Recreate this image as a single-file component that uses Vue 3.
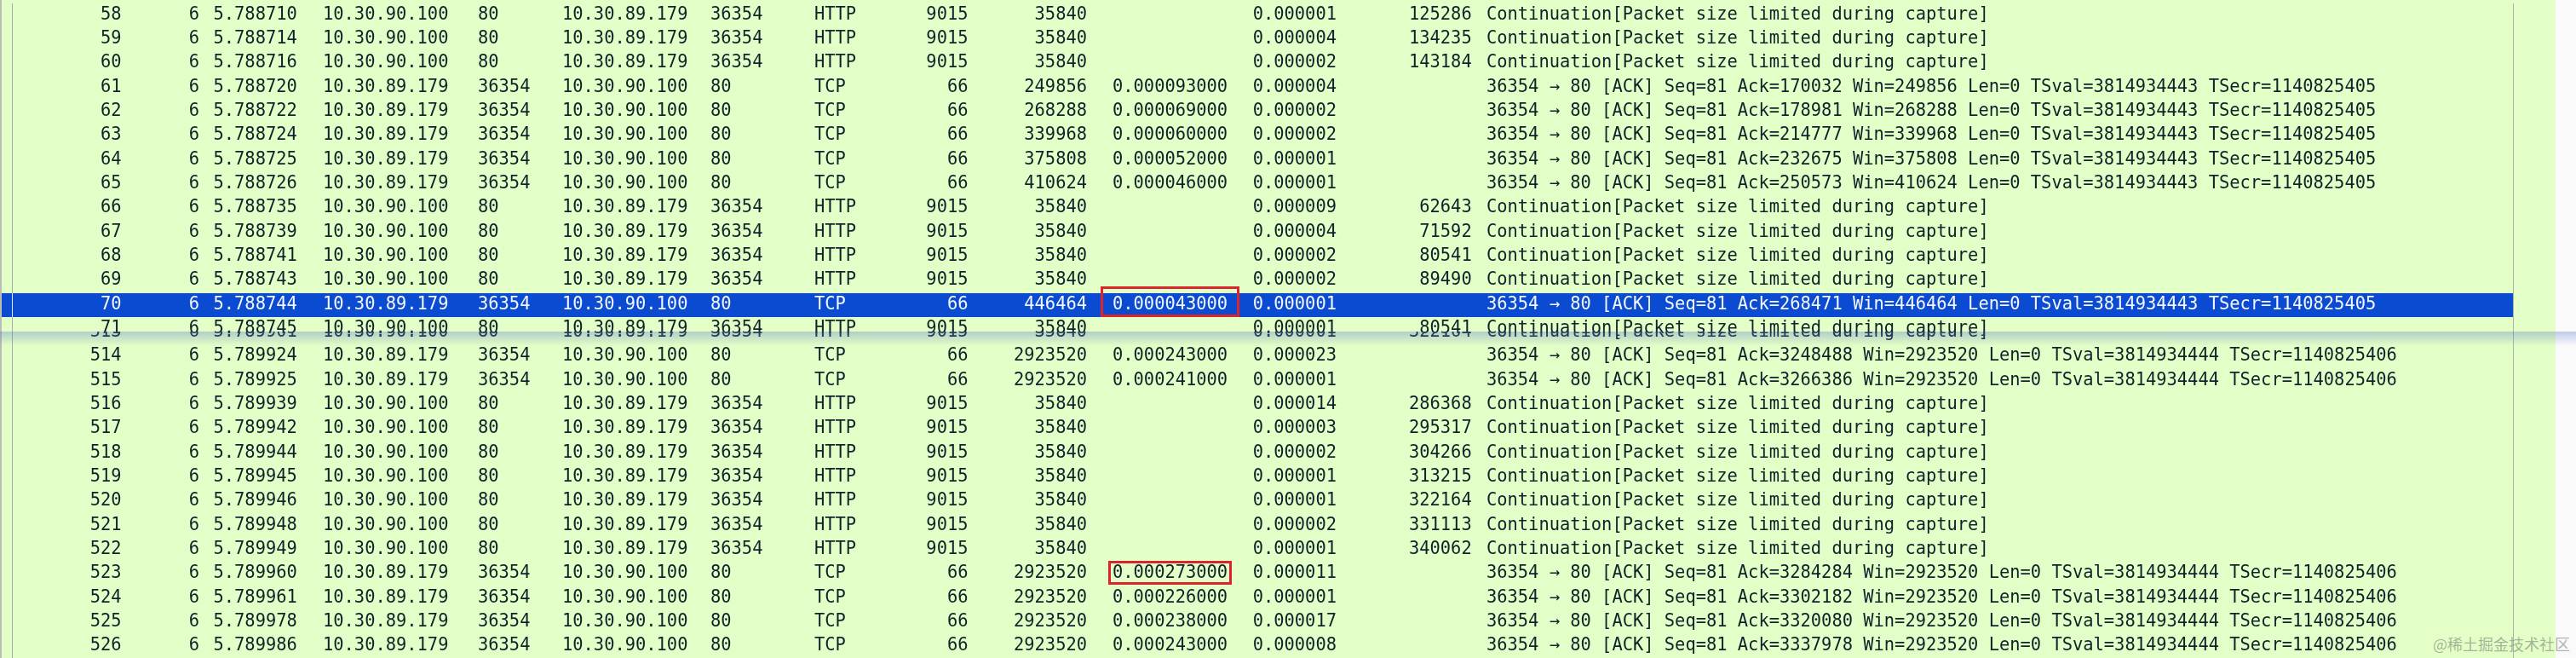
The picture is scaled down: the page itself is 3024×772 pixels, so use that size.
<script setup>
const CLIENT = '10.30.89.179'
const SERVER = '10.30.90.100'

function http(no, time, delta, bytes) {
  return {
    no, time, src: SERVER, sport: '80', dst: CLIENT, dport: '36354', proto: 'HTTP',
    len: '9015', win: '35840', rtt: '', delta, bytes,
    info: 'Continuation[Packet size limited during capture]'
  }
}

function ack(no, time, win, rtt, delta, ackNo, tsval, tsecr, extra = {}) {
  return {
    no, time, src: CLIENT, sport: '36354', dst: SERVER, dport: '80', proto: 'TCP',
    len: '66', win, rtt, delta, bytes: '',
    info: `36354 → 80 [ACK] Seq=81 Ack=${ackNo} Win=${win} Len=0 TSval=${tsval} TSecr=${tsecr}`,
    ...extra
  }
}

const A = ['3814934443', '1140825405']
const B = ['3814934444', '1140825406']

const upper = [
  http('58', '5.788710', '0.000001', '125286'),
  http('59', '5.788714', '0.000004', '134235'),
  http('60', '5.788716', '0.000002', '143184'),
  ack('61', '5.788720', '249856', '0.000093000', '0.000004', '170032', ...A),
  ack('62', '5.788722', '268288', '0.000069000', '0.000002', '178981', ...A),
  ack('63', '5.788724', '339968', '0.000060000', '0.000002', '214777', ...A),
  ack('64', '5.788725', '375808', '0.000052000', '0.000001', '232675', ...A),
  ack('65', '5.788726', '410624', '0.000046000', '0.000001', '250573', ...A),
  http('66', '5.788735', '0.000009', '62643'),
  http('67', '5.788739', '0.000004', '71592'),
  http('68', '5.788741', '0.000002', '80541'),
  http('69', '5.788743', '0.000002', '89490'),
  ack('70', '5.788744', '446464', '0.000043000', '0.000001', '268471', ...A, { selected: true, mark: 'wide' }),
  http('71', '5.788745', '0.000001', '80541')
]

const lower = [
  http('513', '5.789901', '0.000001', '322164'),
  ack('514', '5.789924', '2923520', '0.000243000', '0.000023', '3248488', ...B),
  ack('515', '5.789925', '2923520', '0.000241000', '0.000001', '3266386', ...B),
  http('516', '5.789939', '0.000014', '286368'),
  http('517', '5.789942', '0.000003', '295317'),
  http('518', '5.789944', '0.000002', '304266'),
  http('519', '5.789945', '0.000001', '313215'),
  http('520', '5.789946', '0.000001', '322164'),
  http('521', '5.789948', '0.000002', '331113'),
  http('522', '5.789949', '0.000001', '340062'),
  ack('523', '5.789960', '2923520', '0.000273000', '0.000011', '3284284', ...B, { mark: 'tight' }),
  ack('524', '5.789961', '2923520', '0.000226000', '0.000001', '3302182', ...B),
  ack('525', '5.789978', '2923520', '0.000238000', '0.000017', '3320080', ...B),
  ack('526', '5.789986', '2923520', '0.000243000', '0.000008', '3337978', ...B)
]

const sections = [
  { key: 'upper', rows: upper },
  { key: 'lower', rows: lower }
]
</script>

<template>
  <div class="capture">
    <div class="sheet">
      <section v-for="s in sections" :key="s.key" :class="['pane', s.key]">
        <div v-for="r in s.rows" :key="r.no" :class="['row', { selected: r.selected }]">
          <span class="gutter"></span>
          <span class="end">{{ r.no }}</span>
          <span class="end">6</span>
          <span class="time">{{ r.time }}</span>
          <span>{{ r.src }}</span>
          <span>{{ r.sport }}</span>
          <span>{{ r.dst }}</span>
          <span>{{ r.dport }}</span>
          <span>{{ r.proto }}</span>
          <span class="end">{{ r.len }}</span>
          <span class="end">{{ r.win }}</span>
          <span class="rtt">
            <i v-if="r.mark" :class="['mark', r.mark]"></i>{{ r.rtt }}
          </span>
          <span>{{ r.delta }}</span>
          <span class="end">{{ r.bytes }}</span>
          <span class="info">{{ r.info }}</span>
        </div>
      </section>
    </div>
    <div class="seam"></div>
    <div class="watermark">@稀土掘金技术社区</div>
  </div>
</template>

<style scoped>
.capture {
  position: relative;
  width: 3024px;
  height: 772px;
  overflow: hidden;
  background: #fafafa;
  color: #0f2229;
  font-family: "DejaVu Sans Mono", "Liberation Mono", monospace;
  font-size: 20.42px;
}

.sheet {
  display: flex;
  flex-direction: column;
  width: 2998px;
  height: 772px;
  border-left: 2px solid #b9bdb4;
  box-sizing: content-box;
  margin-right: 24px;
  background: #e3ffc7;
  filter: blur(0.25px);
}

.pane {
  width: 2949px;
}

.upper {
  height: 389px;
  padding-top: 3.83px;
  box-sizing: border-box;
}

.lower {
  height: 383px;
  overflow: hidden;
}

.lower .row:first-child {
  margin-top: -12.9px;
}

.row {
  display: grid;
  grid-template-columns: 13px 127.5px 91.5px 145px 182px 99px 174px 122px 84px 96.5px 139.5px 194.7px 129.3px 127.7px 1fr;
  height: 28.33px;
  line-height: 24.33px;
  white-space: pre;
  border-right: 1px solid #a8b6a6;
  box-sizing: border-box;
}

.row.selected {
  background: #0b4bd2;
  color: #f4f7ff;
  border-right-color: #a8b6a6;
}

.gutter {
  height: 28.33px;
  margin-right: 0;
  border-right: 1px solid #9fb0ab;
  box-sizing: border-box;
}

.selected .gutter {
  border-right-color: #dfe8fb;
}

.end {
  text-align: right;
}

.time {
  padding-left: 16.5px;
}

.rtt {
  position: relative;
  padding-left: 30px;
}

.info {
  padding-left: 17.3px;
}

.mark {
  position: absolute;
  box-sizing: border-box;
  border: 3px solid #d8262c;
}

.mark.wide {
  left: 16px;
  top: -8px;
  width: 163px;
  height: 36px;
}

.mark.tight {
  left: 25px;
  top: -1px;
  width: 144.5px;
  height: 28px;
  box-shadow: 0 0 2px rgba(255, 240, 220, 0.9);
}

.seam {
  position: absolute;
  left: 0;
  right: 0;
  top: 389px;
  height: 17px;
  background: linear-gradient(to bottom, rgba(90, 120, 200, 0.36), rgba(90, 120, 200, 0));
}

.watermark {
  position: absolute;
  right: 7px;
  top: 744px;
  font-family: "Noto Sans CJK SC", sans-serif;
  font-size: 18px;
  line-height: 22px;
  color: rgba(110, 115, 110, 0.55);
}
</style>
